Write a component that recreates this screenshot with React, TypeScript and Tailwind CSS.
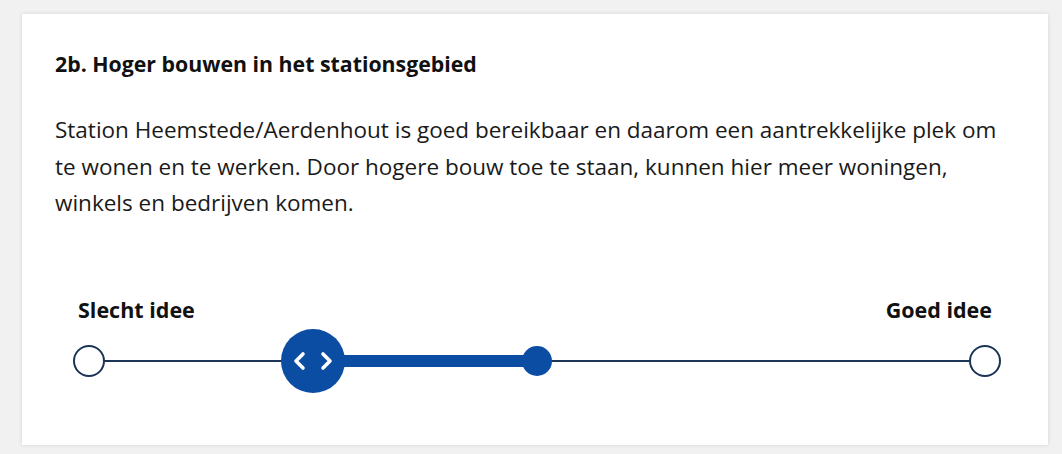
import React from "react";

// Opinion slider: neutral point in the middle, selected value marked by the big handle
const OpinionSlider = ({ value, neutral = 0.5 }: { value: number; neutral?: number }) => {
  const from = Math.min(value, neutral);
  const to = Math.max(value, neutral);

  return (
    <div className="relative ml-[18px] mr-[14px] h-16">
      {/* end points */}
      <div className="absolute left-0 top-1/2 -translate-y-1/2 w-8 h-8 rounded-full border-[2.5px] border-[#1c3557] bg-white z-10" />
      <div className="absolute right-0 top-1/2 -translate-y-1/2 w-8 h-8 rounded-full border-[2.5px] border-[#1c3557] bg-white z-10" />

      <div className="absolute inset-x-4 top-0 bottom-0">
        {/* base track */}
        <div className="absolute inset-x-0 top-1/2 -translate-y-1/2 h-[2px] bg-[#1c3557]" />

        {/* selected range */}
        <div
          className="absolute top-1/2 -translate-y-1/2 h-3 bg-[#0c4da4]"
          style={{ left: `${from * 100}%`, width: `${(to - from) * 100}%` }}
        />

        {/* neutral marker */}
        <div
          className="absolute top-1/2 -translate-x-1/2 -translate-y-1/2 w-[30px] h-[30px] rounded-full bg-[#0c4da4]"
          style={{ left: `${neutral * 100}%` }}
        />

        {/* handle */}
        <button
          type="button"
          aria-label="Schuif"
          className="absolute top-1/2 -translate-x-1/2 -translate-y-1/2 w-16 h-16 rounded-full bg-[#0c4da4] flex items-center justify-center"
          style={{ left: `${value * 100}%` }}
        >
          <svg width="42" height="20" viewBox="0 0 42 20" fill="none">
            <path d="M11 3 L4 10 L11 17" stroke="white" strokeWidth="3.6" strokeLinecap="round" strokeLinejoin="round" />
            <path d="M31 3 L38 10 L31 17" stroke="white" strokeWidth="3.6" strokeLinecap="round" strokeLinejoin="round" />
          </svg>
        </button>
      </div>
    </div>
  );
};

export default function App() {
  return (
    <div
      className="min-h-screen bg-[#f1f1f1] pt-[14px] pl-[22px]"
      style={{ fontFamily: "'Open Sans', 'Noto Sans', sans-serif" }}
    >
      <div className="w-[1026px] h-[431px] bg-white shadow-[0_0_4px_rgba(0,0,0,0.12)] px-[33px] pt-[36px]">
        <h2 className="text-[21.3px] leading-[28px] font-bold text-[#111]">
          2b. Hoger bouwen in het stationsgebied
        </h2>
        <p className="mt-[34px] text-[22.5px] leading-[36.5px] text-[#1a1a1a]">
          Station Heemstede/Aerdenhout is goed bereikbaar en daarom een aantrekkelijke plek om
          te wonen en te werken. Door hogere bouw toe te staan, kunnen hier meer woningen,
          winkels en bedrijven komen.
        </p>

        <div className="mt-[75px]">
          <div className="flex justify-between pl-[23px] pr-[23px] text-[21.5px] leading-[26px] font-bold text-[#111]">
            <span>Slecht idee</span>
            <span>Goed idee</span>
          </div>
          <div className="mt-[6px]">
            <OpinionSlider value={0.25} />
          </div>
        </div>
      </div>
    </div>
  );
}
